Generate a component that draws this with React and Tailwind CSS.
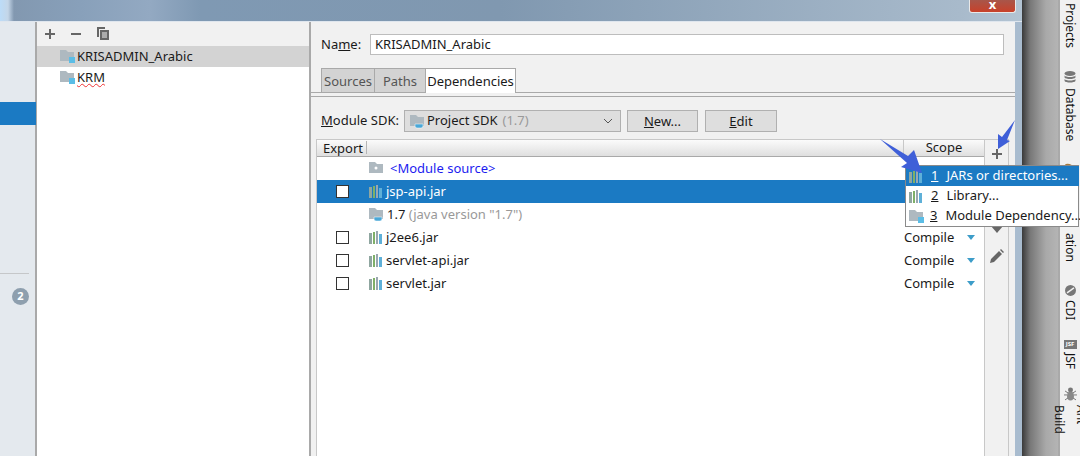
import React from 'react';

const font = { fontFamily: '"Noto Sans", "Open Sans", sans-serif' };

function FolderIcon({ badge, cup, dot }) {
  return (
    <svg width="15" height="15" viewBox="0 0 15 15" className="shrink-0">
      <path d="M0 1h6l2 2h6v9H0z" fill="#aeb9c0" />
      {badge && <rect x="9" y="8" width="6" height="6" fill="#5bbde6" />}
      {dot && <circle cx="7" cy="7" r="1.5" fill="#fff" />}
      {cup && <path d="M5 10h8v2a2 2 0 0 1-2 2H7a2 2 0 0 1-2-2z" fill="#4aa8d8" stroke="#fff" strokeWidth="0.5" />}
    </svg>
  );
}

function JarIcon() {
  return (
    <svg width="14" height="13" viewBox="0 0 14 13" className="shrink-0">
      <rect x="0" y="2" width="3" height="11" fill="#8fa6a0" />
      <rect x="4" y="1" width="2" height="12" fill="#7fb069" />
      <rect x="7" y="0" width="2" height="13" fill="#9aa7b0" />
      <rect x="10" y="3" width="3" height="10" fill="#5fb0d8" />
    </svg>
  );
}

function Row({ check, selected, icon, children }) {
  return (
    <div className={`h-[23px] flex items-center ${selected ? 'bg-[#1b7ac3] text-white' : 'text-[#1a1a1a]'}`}>
      <div className="w-[19px]" />
      <div className="w-[14px] h-[14px] shrink-0">
        {check && <div className={`w-[13px] h-[13px] border border-[#333] ${selected ? 'bg-white' : 'bg-white'}`} />}
      </div>
      <div className="w-[19px]" />
      {icon}
      <div className="ml-[3px] leading-none whitespace-nowrap">{children}</div>
      {check && !selected && (
        <div className="ml-auto flex items-center w-[80px] shrink-0">
          <span>Compile</span>
          <span className="ml-[13px] w-0 h-0 border-l-[4px] border-r-[4px] border-t-[5px] border-l-transparent border-r-transparent border-t-[#3d9dc9]" />
        </div>
      )}
    </div>
  );
}

function Vert({ children, className }) {
  return <div className={`[writing-mode:vertical-rl] leading-[22px] text-[12px] text-[#111] ${className}`}>{children}</div>;
}

export default function App() {
  return (
    <div style={font} className="relative w-[1080px] h-[456px] overflow-hidden flex text-[13px] bg-white">
      {/* window */}
      <div className="w-[1022px] flex flex-col">
        <div className="h-[22px] shrink-0 flex justify-end pr-[2px] border-b border-[#dfe6ee] bg-[linear-gradient(90deg,#bcdcf8_0px,#c4d6e8_8px,#8298b0_14px,#88a0ba_80px,#93a9c2_150px,#7f99b3_200px,#8098b0_500px,#a8bacb_960px,#b3c4d3_1022px)]">
          <div className="w-[47px] h-[13px] mr-[4px] rounded-b-[3px] border border-t-0 border-[#e8e8e8] bg-[linear-gradient(180deg,#a8564a,#c8412a)] flex justify-center">
            <span className="text-white text-[13px] leading-[8px] font-bold">x</span>
          </div>
        </div>
        <div className="flex-1 flex min-h-0 bg-[linear-gradient(90deg,#e4e9ee_1014px,#a9bccf_1015px)]">
          {/* far left */}
          <div className="w-[37px] shrink-0 bg-[#e4e9ee] border-r-2 border-[#a9a9a9] flex flex-col">
            <div className="h-[80px]" />
            <div className="h-[23px] bg-[#1b7ac3] -mr-[1px]" />
            <div className="h-[148px]" />
            <div className="h-px bg-[#c5c7c9] mr-[6px]" />
            <div className="mt-[14px] ml-[12px] w-[17px] h-[17px] rounded-full bg-[#8e9fae] text-white text-[11px] font-bold flex items-center justify-center">2</div>
          </div>
          {/* module list */}
          <div className="w-[272px] shrink-0 flex flex-col bg-white">
            <div className="h-[24px] bg-[#f1f1f1] flex items-center pl-[7px] text-[#555]">
              <svg width="12" height="12" viewBox="0 0 12 12"><path d="M5 1h2v4h4v2H7v4H5V7H1V5h4z" fill="#666" /></svg>
              <svg width="12" height="12" viewBox="0 0 12 12" className="ml-[14px]"><rect x="1" y="5" width="10" height="2" fill="#666" /></svg>
              <svg width="14" height="14" viewBox="0 0 14 14" className="ml-[14px]">
                <path d="M1 0h8v2H3v8H1z" fill="#666" />
                <path d="M4 3h9v10H4z" fill="#666" />
                <path d="M6 6h5M6 8h5M6 10h5" stroke="#f1f1f1" />
              </svg>
            </div>
            <div className="h-[21px] bg-[#d3d3d3] flex items-center pl-[23px]">
              <FolderIcon badge />
              <span className="ml-[2px] text-[#1a1a1a]">KRISADMIN_Arabic</span>
            </div>
            <div className="h-[21px] flex items-center pl-[23px]">
              <FolderIcon badge />
              <span className="ml-[2px] text-[#1a1a1a] underline decoration-wavy decoration-[#e33] decoration-1">KRM</span>
            </div>
          </div>
          {/* settings panel */}
          <div className="w-[706px] shrink-0 border-l-2 border-[#a9a9a9] bg-[#f1f1f1] flex flex-col">
            <div className="flex items-center h-[21px] mt-[12px] pl-[10px] pr-[11px]">
              <span className="w-[49px] text-[#1a1a1a]">Na<span className="underline">m</span>e:</span>
              <div className="flex-1 h-[21px] bg-white border border-[#bdbdbd] pl-[4px] leading-[18px] text-[#1a1a1a]">KRISADMIN_Arabic</div>
            </div>
            <div className="flex h-[25px] mt-[13px] pl-[10px] border-b border-[#a9a9a9] leading-[24px]">
              <div className="w-[54px] bg-[#d3d3d3] border border-b-0 border-[#a9a9a9] text-center text-[#555]">Sources</div>
              <div className="w-[51px] bg-[#d3d3d3] border border-l-0 border-b-0 border-[#a9a9a9] text-center text-[#555]">Paths</div>
              <div className="w-[90px] h-[25px] bg-white border border-l-0 border-b-0 border-[#a9a9a9] text-center text-[#1a1a1a]">Dependencies</div>
            </div>
            <div className="h-[4px] border-b border-[#a9a9a9]" />
            <div className="flex items-center h-[22px] mt-[13px] pl-[10px]">
              <span className="w-[83px] text-[#1a1a1a]"><span className="underline">M</span>odule SDK:</span>
              <div className="w-[217px] h-[22px] bg-[#dedede] border border-[#b0b0b0] flex items-center pl-[5px] pr-[5px]">
                <FolderIcon cup />
                <span className="ml-[2px] text-[#1a1a1a]">Project SDK</span>
                <span className="ml-[5px] text-[#999]">(1.7)</span>
                <svg width="10" height="6" viewBox="0 0 10 6" className="ml-auto mr-[2px]"><path d="M1 1l4 4 4-4" fill="none" stroke="#555" /></svg>
              </div>
              <div className="w-[71px] h-[22px] ml-[6px] bg-[#dedede] border border-[#b0b0b0] text-center leading-[20px] text-[#1a1a1a]"><span className="underline">N</span>ew...</div>
              <div className="w-[72px] h-[22px] ml-[7px] bg-[#dedede] border border-[#b0b0b0] text-center leading-[20px] text-[#1a1a1a]"><span className="underline">E</span>dit</div>
            </div>
            <div className="flex-1 flex min-h-0 mt-[7px] ml-[5px] mr-[6px] border-l border-t border-[#c8c8c8]">
              <div className="flex-1 min-w-0 bg-white">
                <div className="h-[17px] flex bg-[linear-gradient(180deg,#fbfbfb,#dfdfdf)] border-b border-[#a9a9a9] leading-[15px] text-[#1a1a1a]">
                  <div className="w-[50px] pl-[6px] border-r border-[#b5b5b5] h-[13px] mt-[1px]">Export</div>
                  <div className="flex-1 border-r border-[#c8c8c8]" />
                  <div className="w-[80px] text-center">Scope</div>
                </div>
                <Row icon={<FolderIcon dot />}><span className="text-[#1c1cf0] ml-[3px]">&lt;Module source&gt;</span></Row>
                <Row check selected icon={<JarIcon />}>jsp-api.jar</Row>
                <Row icon={<FolderIcon cup />}>1.7 <span className="text-[#999]">(java version "1.7")</span></Row>
                <Row check icon={<JarIcon />}>j2ee6.jar</Row>
                <Row check icon={<JarIcon />}>servlet-api.jar</Row>
                <Row check icon={<JarIcon />}>servlet.jar</Row>
              </div>
              <div className="w-[25px] shrink-0 border-l border-r border-[#c8c8c8] bg-[#f1f1f1] flex flex-col items-center">
                <svg width="12" height="12" viewBox="0 0 12 12" className="mt-[8px]"><path d="M5 1h2v4h4v2H7v4H5V7H1V5h4z" fill="#666" /></svg>
                <svg width="14" height="8" viewBox="0 0 14 8" className="mt-[66px]"><path d="M1 0h12L7 7z" fill="#666" /></svg>
                <svg width="14" height="14" viewBox="0 0 14 14" className="mt-[15px]"><path d="M0 14l1-4 8-8 3 3-8 8zM10 1l1-1 3 3-1 1z" fill="#666" /></svg>
              </div>
            </div>
          </div>
        </div>
      </div>
      {/* shadow */}
      <div className="w-[36px] shrink-0 bg-[linear-gradient(90deg,#3a3a3a,#777_8px,#a9a9a9_24px,#b4b4b4)]" />
      {/* tool strip */}
      <div className="w-[22px] shrink-0 border-l-2 border-[#a9a9a9] bg-[#f1f1f1] flex flex-col items-center">
        <Vert className="mt-[3px]">Projects</Vert>
        <svg width="12" height="12" viewBox="0 0 12 12" className="mt-[23px]"><ellipse cx="6" cy="2.5" rx="5.5" ry="2.5" fill="#777" /><path d="M.5 4.5c1 2 10 2 11 0v2c-1 2-10 2-11 0zM.5 8c1 2 10 2 11 0v2c-1 2-10 2-11 0z" fill="#777" /></svg>
        <Vert className="mt-[5px]">Database</Vert>
        <svg width="15" height="15" viewBox="0 0 15 15" className="mt-[22px]"><ellipse cx="7" cy="5" rx="6" ry="3.5" fill="#a87b3c" transform="rotate(30 7 5)" /><path d="M7 9l6 4 1-6-3 2z" fill="#4a9b3a" /></svg>
        <Vert className="mt-[55px]">ation</Vert>
        <svg width="11" height="11" viewBox="0 0 11 11" className="mt-[23px]"><circle cx="5.5" cy="5.5" r="5.5" fill="#777" /><path d="M2 8l7-5" stroke="#f1f1f1" strokeWidth="1.5" /></svg>
        <Vert className="mt-[4px]">CDI</Vert>
        <div className="mt-[20px] w-[13px] h-[9px] bg-[#777] text-white text-[6px] leading-[9px] font-bold text-center">JSF</div>
        <Vert className="mt-[4px]">JSF</Vert>
        <svg width="13" height="14" viewBox="0 0 13 14" className="mt-[18px]"><ellipse cx="6.5" cy="3" rx="2.5" ry="2.5" fill="#777" /><ellipse cx="6.5" cy="9" rx="3.5" ry="4.5" fill="#888" /><path d="M1 4l3 2M12 4L9 6M0 8h3M13 8h-3M1 13l3-2M12 13l-3-2" stroke="#777" /></svg>
        <Vert className="mt-[4px]">Ant Build</Vert>
      </div>

      {/* add dependency popup */}
      <div className="absolute left-[905px] top-[165px] w-[174px] h-[62px] bg-white border border-[#8a8a8a] text-[#1a1a1a] flex flex-col">
        <div className="h-[20px] bg-[#1b7ac3] text-white flex items-center pl-[3px] -mr-[1px]">
          <JarIcon /><span className="ml-[8px] underline">1</span><span className="ml-[8px] whitespace-nowrap">JARs or directories...</span>
        </div>
        <div className="h-[20px] flex items-center pl-[3px]">
          <JarIcon /><span className="ml-[8px] underline">2</span><span className="ml-[8px]">Library...</span>
        </div>
        <div className="h-[20px] flex items-center pl-[3px]">
          <FolderIcon badge /><span className="ml-[6px] underline">3</span><span className="ml-[8px] whitespace-nowrap">Module Dependency...</span>
        </div>
      </div>

      {/* annotation arrows */}
      <svg width="1080" height="456" viewBox="0 0 1080 456" className="absolute left-0 top-0 pointer-events-none">
        <path d="M880 139l28 17 6-6 8 23-21-6 6-4z" fill="#3f5fd8" />
        <path d="M1015 120l-8 20 3 1-12 8 0-15 4 3z" fill="#3f5fd8" />
      </svg>
    </div>
  );
}
